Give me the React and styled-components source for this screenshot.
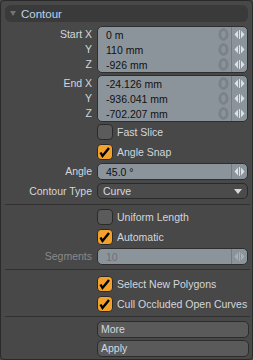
import React from "react";
import styled, { createGlobalStyle } from "styled-components";

const GlobalStyle = createGlobalStyle`
  body {
    margin: 0;
    background: #484848;
    font-family: "Liberation Sans", Arial, sans-serif;
  }
`;

const ResetIcon = () => (
  <svg width="11" height="13" viewBox="0 0 11 13">
    <ellipse cx="5.5" cy="6.5" rx="3.6" ry="4.9" fill="none" stroke="#7c8289" strokeWidth="3" />
  </svg>
);

const SpinIcon = ({ dim }) => (
  <svg width="11" height="9" viewBox="0 0 11 9">
    <g fill={dim ? "#a9aeb3" : "#dde1e5"}>
      <polygon points="4,0.5 0.5,4.5 4,8.5" />
      <rect x="5" y="0" width="1" height="9" />
      <polygon points="7,0.5 10.5,4.5 7,8.5" />
    </g>
  </svg>
);

const CheckMark = () => (
  <svg width="16" height="16" viewBox="0 0 16 16">
    <polyline points="3.5,8.5 5.5,12 12,4" fill="none" stroke="#000" strokeWidth="2.4" strokeLinejoin="miter" />
  </svg>
);

const Field = ({ value, reset = true, disabled }) => (
  <FieldRow>
    <Value $disabled={disabled}>{value}</Value>
    {reset && (
      <ResetCell>
        <ResetIcon />
      </ResetCell>
    )}
    <SpinCell>
      <SpinIcon dim={disabled} />
    </SpinCell>
  </FieldRow>
);

const Check = ({ label, checked }) => (
  <Row>
    <span />
    <CheckLine>
      <Box $checked={checked}>{checked && <CheckMark />}</Box>
      <CheckText>{label}</CheckText>
    </CheckLine>
  </Row>
);

const App = () => {
  return (
    <>
      <GlobalStyle />
      <Panel>
        <Header>
          <Caret />
          <HeaderTitle>Contour</HeaderTitle>
        </Header>

        <Group>
          <Labels>
            <Label>Start X</Label>
            <Label>Y</Label>
            <Label>Z</Label>
          </Labels>
          <FieldBox>
            <Field value="0 m" />
            <Field value="110 mm" />
            <Field value="-926 mm" />
          </FieldBox>
        </Group>

        <Group>
          <Labels>
            <Label>End X</Label>
            <Label>Y</Label>
            <Label>Z</Label>
          </Labels>
          <FieldBox>
            <Field value="-24.126 mm" />
            <Field value="-936.041 mm" />
            <Field value="-702.207 mm" />
          </FieldBox>
        </Group>

        <Check label="Fast Slice" />
        <Check label="Angle Snap" checked />

        <Row style={{ marginTop: 1 }}>
          <Label>Angle</Label>
          <FieldBox>
            <Field value="45.0 °" reset={false} />
          </FieldBox>
        </Row>

        <Row style={{ marginTop: 3 }}>
          <Label>Contour Type</Label>
          <Select>
            <span>Curve</span>
            <SelectArrow />
          </Select>
        </Row>

        <Separator style={{ marginTop: 5, marginBottom: 2 }} />

        <Check label="Uniform Length" />
        <Check label="Automatic" checked />

        <Row style={{ marginTop: 1 }}>
          <Label $disabled>Segments</Label>
          <FieldBox>
            <Field value="10" reset={false} disabled />
          </FieldBox>
        </Row>

        <Separator style={{ marginTop: 4, marginBottom: 4 }} />

        <Check label="Select New Polygons" checked />
        <Check label="Cull Occluded Open Curves" checked />

        <Separator style={{ marginTop: 2, marginBottom: 4 }} />

        <Button>More</Button>
        <Button>Apply</Button>
      </Panel>
    </>
  );
};

export default App;

const Panel = styled.div`
  width: 253px;
  height: 360px;
  box-sizing: border-box;
  border: 1px solid #2a2a2a;
  border-radius: 4px;
  background: #484848;
  padding: 4px 4px 0 4px;
  display: flex;
  flex-direction: column;
  font-size: 10.5px;
`;
const Header = styled.div`
  height: 17px;
  background: #3a3a3a;
  border-radius: 6px;
  display: flex;
  align-items: center;
  padding-left: 5px;
  gap: 5px;
`;
const Caret = styled.div`
  width: 0;
  height: 0;
  border-left: 3px solid transparent;
  border-right: 3px solid transparent;
  border-top: 5px solid #747474;
`;
const HeaderTitle = styled.span`
  color: #bcd3ea;
  font-size: 11.5px;
`;
const Group = styled.div`
  display: grid;
  grid-template-columns: 87px 1fr;
  column-gap: 5px;
  margin-top: 4px;
  & + & {
    margin-top: 2px;
  }
`;
const Labels = styled.div`
  display: flex;
  flex-direction: column;
  padding-top: 1px;
`;
const Label = styled.div`
  height: 15px;
  line-height: 15px;
  text-align: right;
  color: ${(p) => (p.$disabled ? "#8a8a8a" : "#d2d7dc")};
  white-space: nowrap;
`;
const FieldBox = styled.div`
  border: 1px solid #2e2e2e;
  border-radius: 5px;
  background: #8c949b;
  overflow: hidden;
  display: flex;
  flex-direction: column;
`;
const FieldRow = styled.div`
  height: 15px;
  display: flex;
  align-items: center;
`;
const Value = styled.div`
  flex: 1;
  padding-left: 8px;
  color: ${(p) => (p.$disabled ? "#6a7077" : "#111")};
  white-space: nowrap;
`;
const ResetCell = styled.div`
  width: 14px;
  display: flex;
  align-items: center;
  justify-content: center;
  margin-right: 1px;
`;
const SpinCell = styled.div`
  width: 15px;
  height: 100%;
  border-left: 1px solid #737a81;
  display: flex;
  align-items: center;
  justify-content: center;
`;
const Row = styled.div`
  display: grid;
  grid-template-columns: 87px 1fr;
  column-gap: 5px;
  align-items: center;
  min-height: 16px;
`;
const CheckLine = styled.div`
  height: 20px;
  display: flex;
  align-items: center;
  gap: 4px;
`;
const Box = styled.div`
  width: 14px;
  height: 14px;
  border: 1px solid #2a2a2a;
  border-radius: 4px;
  background: ${(p) => (p.$checked ? "#f2a22c" : "#5b5b5b")};
  display: flex;
  align-items: center;
  justify-content: center;
  svg {
    flex-shrink: 0;
  }
`;
const CheckText = styled.span`
  color: #d2d7dc;
  white-space: nowrap;
`;
const Select = styled.div`
  height: 14px;
  border: 1px solid #2a2a2a;
  border-radius: 5px;
  background: #4b4b4b;
  display: flex;
  align-items: center;
  justify-content: space-between;
  padding: 0 5px 0 5px;
  color: #d6dbe0;
`;
const SelectArrow = styled.div`
  width: 0;
  height: 0;
  border-left: 4px solid transparent;
  border-right: 4px solid transparent;
  border-top: 5px solid #d8d8d8;
`;
const Separator = styled.div`
  height: 1px;
  background: #313131;
  margin-right: -2px;
`;
const Button = styled.div`
  margin-left: 92px;
  margin-right: -1px;
  height: 15px;
  line-height: 15px;
  border: 1px solid #2c2c2c;
  border-radius: 5px;
  background: #5a5a5a;
  padding-left: 3px;
  color: #cfd8e1;
  & + & {
    margin-top: 2px;
  }
`;
